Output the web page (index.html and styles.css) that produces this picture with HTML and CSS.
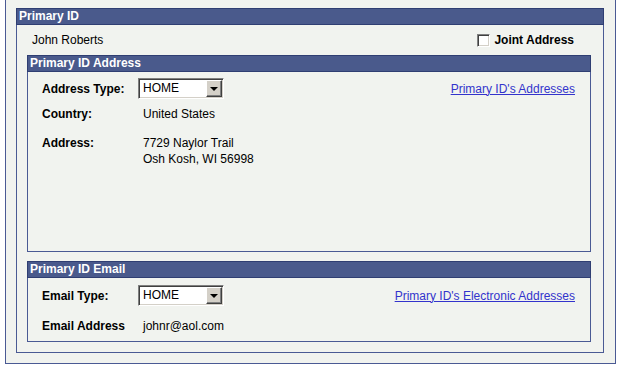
FILE: index.html
```html
<!DOCTYPE html>
<html lang="en">
<head>
  <meta charset="UTF-8">
  <title>Primary ID</title>
  <link rel="stylesheet" href="styles.css">
</head>
<body>
  <div class="frame">
    <!-- Primary ID group -->
    <div class="box main-box">
      <div class="box-head">Primary ID</div>
      <div class="id-row">
        <span>John Roberts</span>
        <label class="joint"><span class="check"></span>Joint Address</label>
      </div>

      <div class="box sub-box address-box">
        <div class="box-head">Primary ID Address</div>
        <div class="fields">
          <div class="field-row first">
            <span class="label">Address Type:</span>
            <span class="dropdown">HOME<span class="drop-btn"><span class="arrow"></span></span></span>
            <a href="#" class="side-link">Primary ID's Addresses</a>
          </div>
          <div class="field-row country">
            <span class="label">Country:</span>
            <span class="value">United States</span>
          </div>
          <div class="field-row address">
            <span class="label">Address:</span>
            <span class="value">7729 Naylor Trail<br>Osh Kosh, WI 56998</span>
          </div>
        </div>
      </div>

      <div class="box sub-box email-box">
        <div class="box-head">Primary ID Email</div>
        <div class="fields">
          <div class="field-row first email-first">
            <span class="label">Email Type:</span>
            <span class="dropdown">HOME<span class="drop-btn"><span class="arrow"></span></span></span>
            <a href="#" class="side-link">Primary ID's Electronic Addresses</a>
          </div>
          <div class="field-row email-addr">
            <span class="label">Email Address</span>
            <span class="value">johnr@aol.com</span>
          </div>
        </div>
      </div>
    </div>
  </div>
</body>
</html>
```

FILE: styles.css
```css
body {
  margin: 0;
  background: #fff;
  font-family: "Liberation Sans", Arial, sans-serif;
  font-size: 12px;
  color: #000;
}

.frame {
  box-sizing: border-box;
  width: 611px;
  height: 364px;
  margin-left: 5px;
  padding: 8px 11px 10px 10px;
  background: #f1f3ef;
  border: 1px solid #4a5a94;
  border-top: none;
}

.box {
  box-sizing: border-box;
  border: 1px solid #4a5a94;
}

.box-head {
  box-sizing: border-box;
  height: 17px;
  margin: -1px -1px 0;
  padding-left: 2px;
  background: #4a5a8c;
  border: 1px solid #2f3e72;
  color: #fff;
  font-weight: bold;
  line-height: 15px;
}

.main-box {
  height: 345px;
  padding: 0 12px 0 10px;
}

.main-box > .box-head {
  margin: -1px -13px 0 -11px;
}

.id-row {
  height: 30px;
  display: flex;
  align-items: center;
  justify-content: space-between;
  padding: 0 17px 0 5px;
}

.joint {
  display: flex;
  align-items: center;
  font-weight: bold;
}

.check {
  box-sizing: border-box;
  width: 13px;
  height: 13px;
  margin-right: 4px;
  background: #fff;
  border: 1px solid;
  border-color: #808080 #fff #fff #808080;
  box-shadow: inset 1px 1px #404040, inset -1px -1px #d4d0c8;
}

.address-box {
  height: 197px;
}

.email-box {
  height: 81px;
  margin-top: 9px;
}

.fields {
  padding: 5px 15px 0 14px;
}

.field-row {
  display: flex;
  align-items: center;
  line-height: 16px;
}

.field-row.first {
  padding-top: 1px;
}

.field-row.country {
  margin-top: 7px;
}

.field-row.address {
  margin-top: 13px;
  align-items: flex-start;
}

.email-box .fields {
  padding-top: 6px;
}

.field-row.email-addr {
  margin-top: 12px;
}

.label {
  width: 96px;
  font-weight: bold;
}

.value {
  padding-left: 5px;
}

.dropdown {
  box-sizing: border-box;
  position: relative;
  width: 86px;
  height: 21px;
  padding-left: 4px;
  background: #fff;
  border: 1px solid;
  border-color: #808080 #fff #fff #808080;
  box-shadow: inset 1px 1px #404040, inset -1px -1px #d4d0c8;
  line-height: 19px;
}

.drop-btn {
  position: absolute;
  top: 1px;
  right: 1px;
  box-sizing: border-box;
  width: 16px;
  height: 17px;
  background: #d4d0c8;
  border: 1px solid;
  border-color: #fff #404040 #404040 #fff;
  box-shadow: inset -1px -1px #808080;
  display: flex;
  align-items: center;
  justify-content: center;
}

.arrow {
  width: 0;
  height: 0;
  border-left: 4px solid transparent;
  border-right: 4px solid transparent;
  border-top: 4px solid #000;
}

.side-link {
  margin-left: auto;
  color: #3333cc;
}
```
